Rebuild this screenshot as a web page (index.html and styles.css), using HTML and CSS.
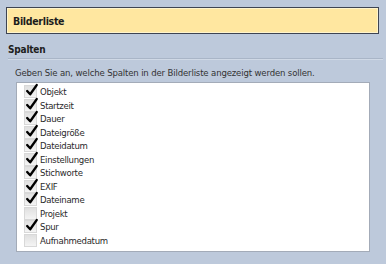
FILE: index.html
```html
<!DOCTYPE html>
<html>
<head>
<meta charset="utf-8">
<link rel="stylesheet" href="styles.css">
</head>
<body>
<div class="header"><span class="header-title">Bilderliste</span></div>
<div class="section">
  <div class="section-title">Spalten</div>
  <div class="separator"></div>
  <div class="desc">Geben Sie an, welche Spalten in der Bilderliste angezeigt werden sollen.</div>
  <div class="list">
    <div class="item"><span class="cb checked"><svg viewBox="0 0 12 12"><path d="M2 6.5 L4.8 9.5 L10.8 1"/></svg></span><span class="label">Objekt</span></div>
    <div class="item"><span class="cb checked"><svg viewBox="0 0 12 12"><path d="M2 6.5 L4.8 9.5 L10.8 1"/></svg></span><span class="label">Startzeit</span></div>
    <div class="item"><span class="cb checked"><svg viewBox="0 0 12 12"><path d="M2 6.5 L4.8 9.5 L10.8 1"/></svg></span><span class="label">Dauer</span></div>
    <div class="item"><span class="cb checked"><svg viewBox="0 0 12 12"><path d="M2 6.5 L4.8 9.5 L10.8 1"/></svg></span><span class="label">Dateigröße</span></div>
    <div class="item"><span class="cb checked"><svg viewBox="0 0 12 12"><path d="M2 6.5 L4.8 9.5 L10.8 1"/></svg></span><span class="label">Dateidatum</span></div>
    <div class="item"><span class="cb checked"><svg viewBox="0 0 12 12"><path d="M2 6.5 L4.8 9.5 L10.8 1"/></svg></span><span class="label">Einstellungen</span></div>
    <div class="item"><span class="cb checked"><svg viewBox="0 0 12 12"><path d="M2 6.5 L4.8 9.5 L10.8 1"/></svg></span><span class="label">Stichworte</span></div>
    <div class="item"><span class="cb checked"><svg viewBox="0 0 12 12"><path d="M2 6.5 L4.8 9.5 L10.8 1"/></svg></span><span class="label">EXIF</span></div>
    <div class="item"><span class="cb checked"><svg viewBox="0 0 12 12"><path d="M2 6.5 L4.8 9.5 L10.8 1"/></svg></span><span class="label">Dateiname</span></div>
    <div class="item"><span class="cb"></span><span class="label">Projekt</span></div>
    <div class="item"><span class="cb checked"><svg viewBox="0 0 12 12"><path d="M2 6.5 L4.8 9.5 L10.8 1"/></svg></span><span class="label">Spur</span></div>
    <div class="item"><span class="cb"></span><span class="label">Aufnahmedatum</span></div>
  </div>
</div>
</body>
</html>
```

FILE: styles.css
```css
html, body {
  margin: 0;
  padding: 0;
}
body {
  background: #bdc9db;
  font-family: "DejaVu Sans Condensed", "DejaVu Sans", sans-serif;
  font-size: 9.5px;
  letter-spacing: -0.3px;
  color: #1e1e1e;
  width: 386px;
  height: 264px;
  overflow: hidden;
}
.header {
  margin: 7px 7px 0 6px;
  height: 25px;
  border: 1px solid #3e4452;
  background: #ffe7a0;
  box-shadow: inset 0 0 0 1px #fff4cc;
  display: flex;
  align-items: center;
  padding-left: 6px;
}
.header-title {
  font-weight: bold;
  font-size: 10.5px;
  letter-spacing: -0.3px;
  color: #1c1c1c;
}
.section {
  padding: 0 3px 0 8px;
}
.section-title {
  margin-top: 8px;
  font-weight: bold;
  font-size: 10px;
  letter-spacing: -0.2px;
  height: 15px;
  line-height: 15px;
}
.separator {
  margin-top: 1px;
  height: 1px;
  background: #a9b5c7;
  border-bottom: 1px solid #d0d9e6;
}
.desc {
  margin: 6px 0 0 7px;
  height: 14px;
  line-height: 14px;
  letter-spacing: -0.15px;
  color: #333;
}
.list {
  margin: 2px 0 0 8px;
  width: 354px;
  height: 170px;
  background: #fff;
  border: 1px solid #a3abb8;
  padding-top: 2px;
  box-sizing: border-box;
}
.item {
  height: 13.5px;
  display: flex;
  align-items: center;
  padding-left: 7px;
}
.cb {
  width: 11px;
  height: 11px;
  border: 1px solid #d8d8d8;
  background: linear-gradient(#e0e0e0, #f4f4f4);
  position: relative;
  flex: none;
}
.cb svg {
  position: absolute;
  left: 0;
  top: -2px;
  width: 13px;
  height: 13px;
  overflow: visible;
}
.cb svg path {
  fill: none;
  stroke: #000;
  stroke-width: 2.2;
  stroke-linecap: round;
  stroke-linejoin: round;
}
.label {
  margin-left: 3px;
  color: #2a2a2a;
}
```
